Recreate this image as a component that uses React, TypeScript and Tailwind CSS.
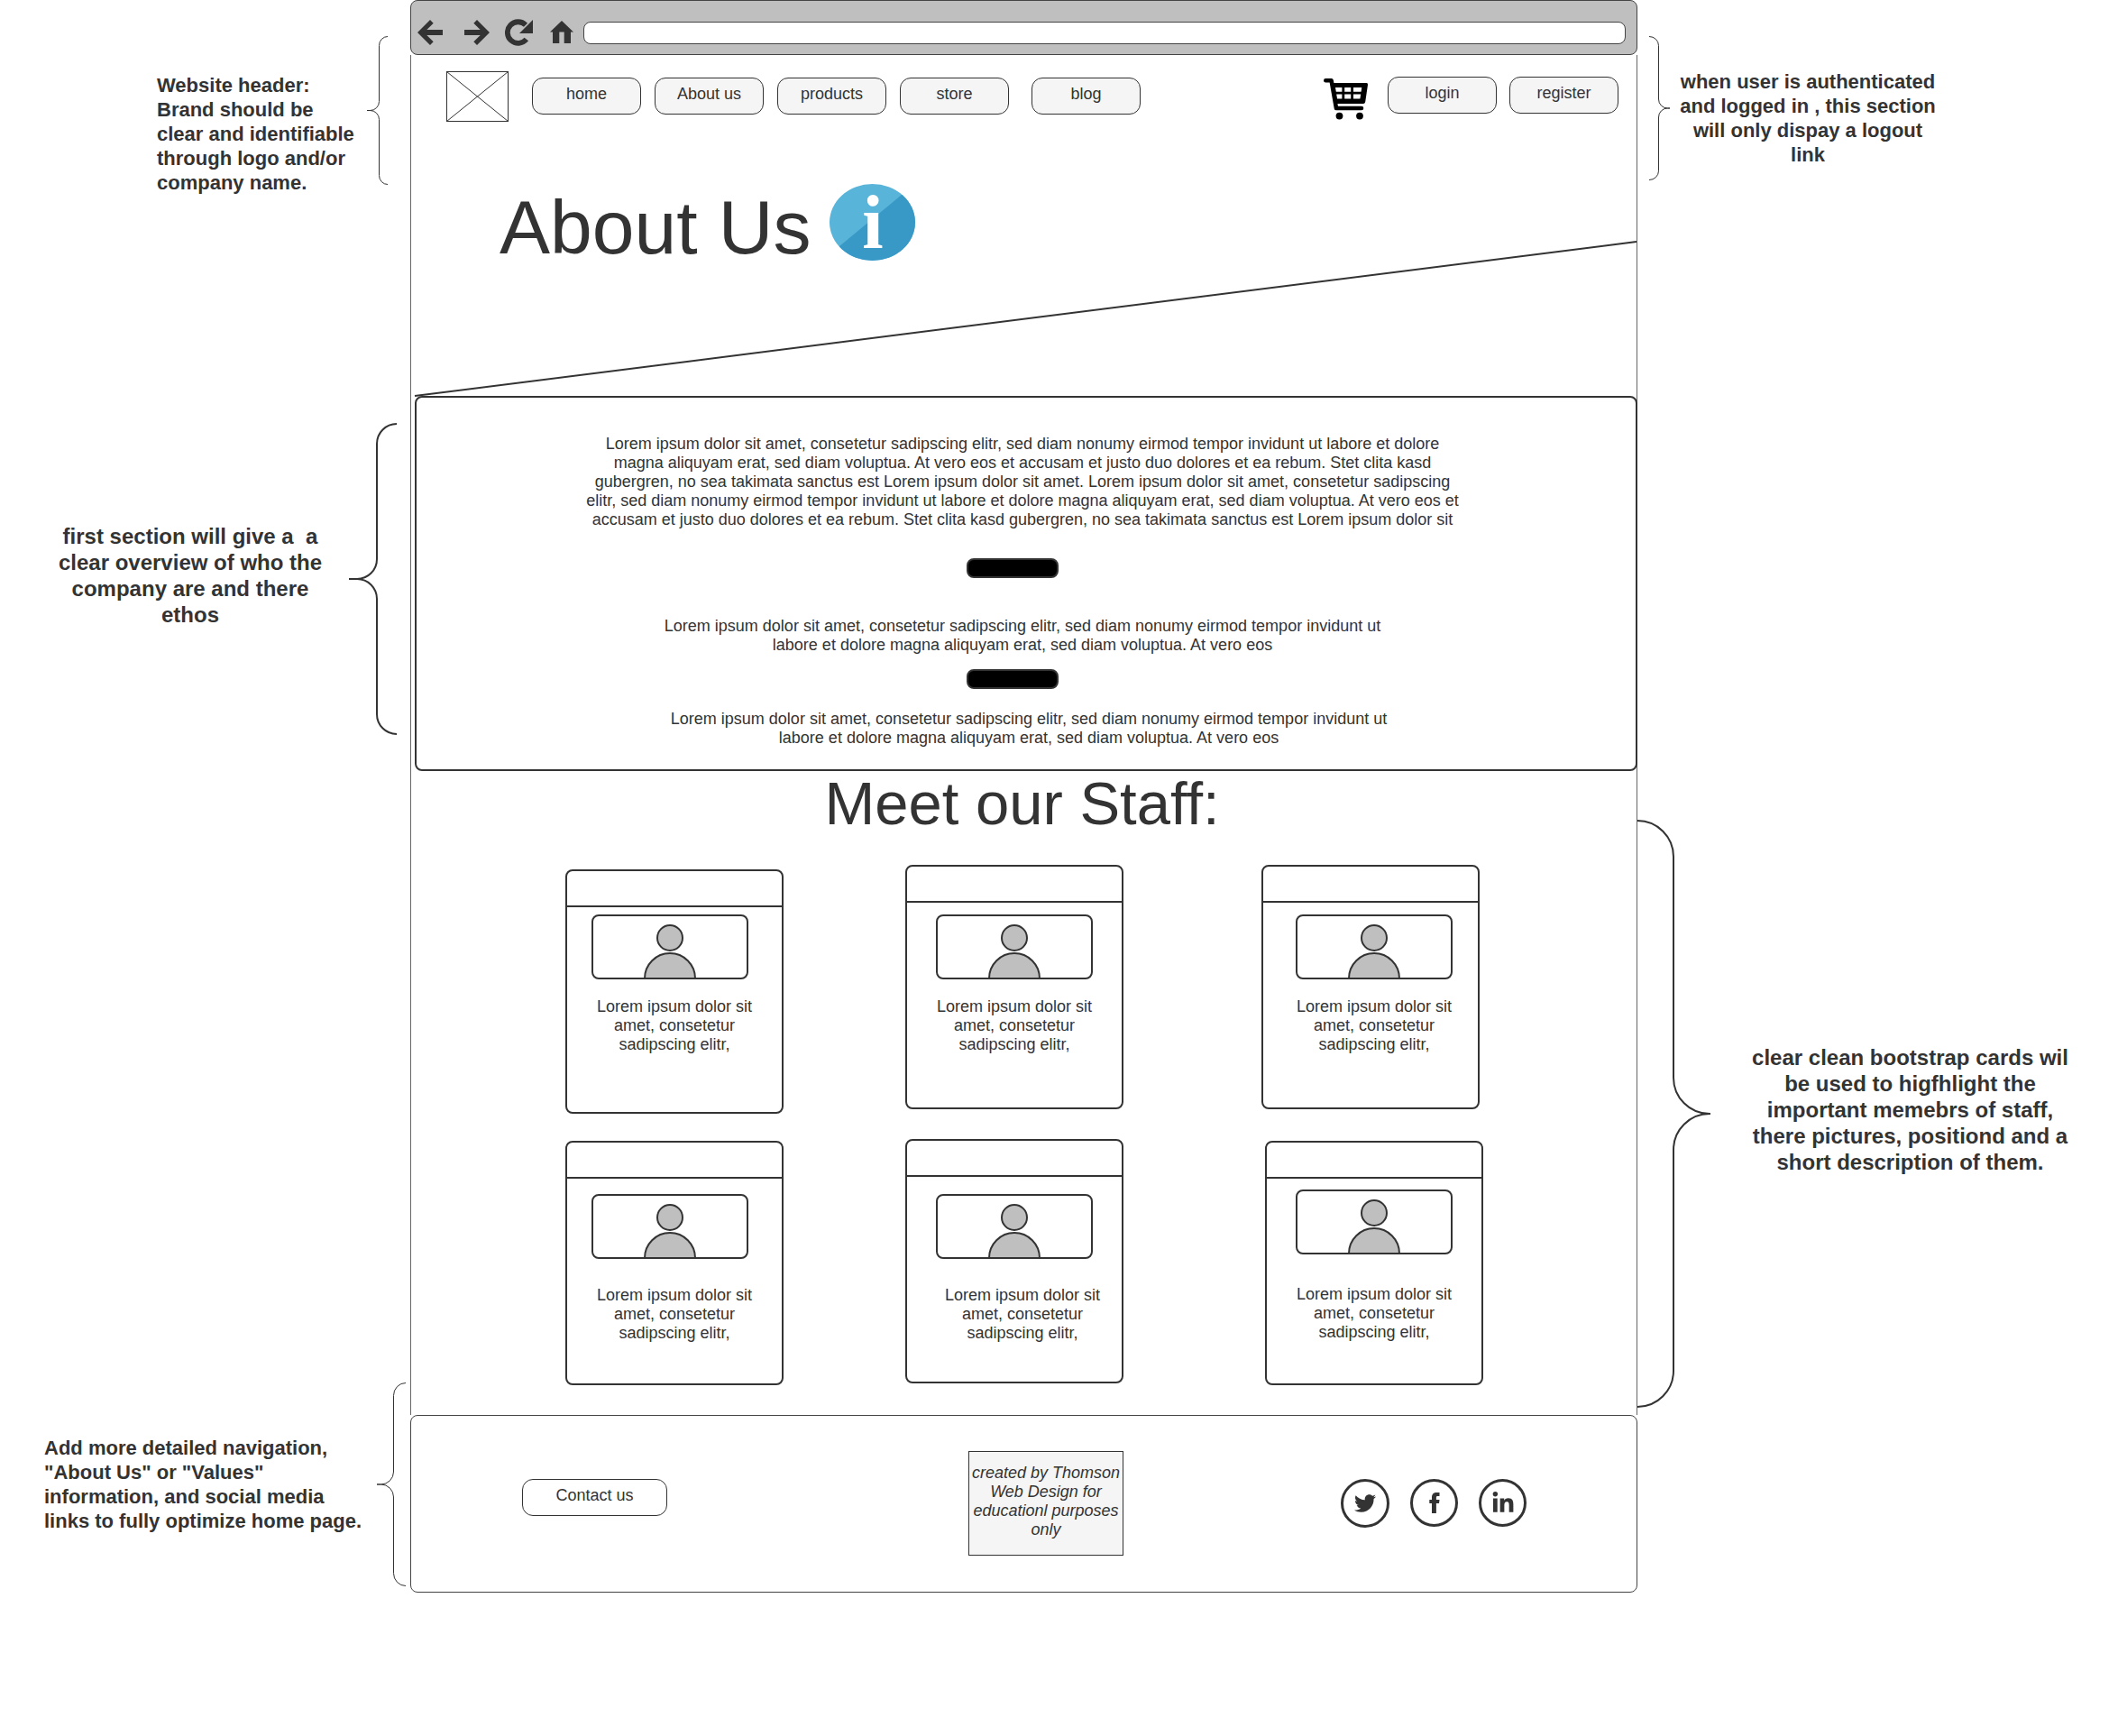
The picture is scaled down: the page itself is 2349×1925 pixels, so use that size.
import type { ReactNode } from "react";
import { FaLinkedinIn, FaTwitter } from "react-icons/fa";

const INK = "#333333";

function Lines({ lines }: { lines: string[] }) {
  return (
    <>
      {lines.map((line, i) => (
        <span key={i} className="block whitespace-pre">
          {line}
        </span>
      ))}
    </>
  );
}

type BraceProps = {
  side: "left" | "right";
  width: number;
  height: number;
  radius: number;
  spine: number;
  stroke: number;
};

/* Curly brace; `spine` is the distance from the pointed side to the long vertical stroke. */
function Brace({ side, width, height, radius: r, spine, stroke }: BraceProps) {
  const mid = height / 2;
  const t = spine - r;
  const top = stroke / 2;
  const bottom = height - stroke / 2;
  const d =
    `M${width} ${top} A${width - spine} ${r} 0 0 0 ${spine} ${top + r} V${mid - r} A${r} ${r} 0 0 1 ${t} ${mid} H0 H${t} ` +
    `A${r} ${r} 0 0 1 ${spine} ${mid + r} V${bottom - r} A${width - spine} ${r} 0 0 0 ${width} ${bottom}`;
  return (
    <svg width={width} height={height} viewBox={`0 0 ${width} ${height}`} fill="none" stroke={INK} strokeWidth={stroke} className="shrink-0" aria-hidden="true">
      <path d={d} transform={side === "right" ? `translate(${width} 0) scale(-1 1)` : undefined} />
    </svg>
  );
}

function BarButton({ label, children }: { label: string; children: ReactNode }) {
  return (
    <button type="button" aria-label={label} className="shrink-0 text-[#333333]">
      {children}
    </button>
  );
}

function BrowserBar() {
  return (
    <div className="flex h-[61px] items-center rounded-lg border border-[#444444] bg-[#bfbfbf] pt-[11px] pr-3 pl-[7px]">
      <BarButton label="Back">
        <svg width="28" height="28" viewBox="0 0 28 28" fill="currentColor">
          <path d="M0 14 14 0l3.7 3.7L10.3 11H28v6H10.3l7.4 7.3L14 28z" />
        </svg>
      </BarButton>
      <span className="w-6" />
      <BarButton label="Forward">
        <svg width="28" height="28" viewBox="0 0 28 28" fill="currentColor">
          <path d="M28 14 14 0l-3.7 3.7 7.4 7.3H0v6h17.7l-7.4 7.3L14 28z" />
        </svg>
      </BarButton>
      <span className="w-[17px]" />
      <BarButton label="Reload">
        <svg width="31" height="30" viewBox="0 0 31 30">
          <path d="M23 6.7A11.8 11.8 0 1 0 23.8 22.5" fill="none" stroke="currentColor" strokeWidth="5.8" />
          <path d="M31 1v15H16z" fill="currentColor" />
        </svg>
      </BarButton>
      <span className="w-[19px]" />
      <BarButton label="Home">
        <svg width="26" height="26" viewBox="0 0 26 26" fill="currentColor">
          <path d="M13 0l13 12.6h-3V25h-7.3V12.4h-5.4V25H3V12.6H0z" />
        </svg>
      </BarButton>
      <input type="text" aria-label="Address" className="ml-[11px] h-[25px] min-w-0 flex-1 rounded-lg border border-[#444444] bg-white px-3 text-sm outline-none" />
    </div>
  );
}

function PillLink({ children, className = "" }: { children: ReactNode; className?: string }) {
  return (
    <a href="#" className={`block h-[41px] w-[121px] rounded-xl border border-[#333333] bg-[#f5f5f5] pt-[7px] text-center text-[18px] leading-[21px] ${className}`}>
      {children}
    </a>
  );
}

function CartIcon() {
  return (
    <svg width="50" height="46" viewBox="0 0 50 46" aria-hidden="true">
      <path d="M2.3 2.3H8.6L14 33H42" fill="none" stroke="#000" strokeWidth="4.6" strokeLinecap="round" strokeLinejoin="round" />
      <path
        fillRule="evenodd"
        d="M9 5H47.5Q49.3 5 49 7L46.2 26Q45.8 28 44 28H13zM13 9.9l.8 4.8h6.6V9.9zM23.2 9.9v4.8h7V9.9zM33 9.9v4.8h8.6l.7-4.8zM14.2 17.6l.8 5h5.4v-5zM23.2 17.6v5h7v-5zM33 17.6v5h7.4l.8-5z"
      />
      <circle cx="17.5" cy="41.6" r="3.9" />
      <circle cx="40" cy="41.6" r="3.9" />
    </svg>
  );
}

function SiteHeader() {
  return (
    <header className="flex items-start pt-[18px] pr-5 pl-[39px]">
      <a href="#" aria-label="Logo" className="block shrink-0">
        <svg width="69" height="56" viewBox="0 0 69 56" fill="none" stroke={INK} strokeWidth="1">
          <rect x="0.5" y="0.5" width="68" height="55" />
          <path d="M0.5 0.5l68 55M68.5 0.5l-68 55" />
        </svg>
      </a>
      <nav className="mt-[7px] ml-[26px] flex gap-[15px]">
        <PillLink>home</PillLink>
        <PillLink>About us</PillLink>
        <PillLink>products</PillLink>
        <PillLink>store</PillLink>
        <PillLink className="ml-2.5">blog</PillLink>
      </nav>
      <div className="mt-[6px] ml-auto flex gap-[14px]">
        <a href="#" aria-label="Cart" className="mt-0.5 mr-[7px]">
          <CartIcon />
        </a>
        <PillLink>login</PillLink>
        <PillLink>register</PillLink>
      </div>
    </header>
  );
}

function InfoIcon() {
  return (
    <div className="relative h-[85px] w-[95px] shrink-0">
      <svg width="95" height="85" viewBox="0 0 95 85" aria-hidden="true">
        <defs>
          <clipPath id="info-disc">
            <ellipse cx="47.5" cy="42.5" rx="47.5" ry="42.5" />
          </clipPath>
        </defs>
        <g clipPath="url(#info-disc)">
          <rect width="95" height="85" fill="#59b4d9" />
          <path d="M80 12 11 69v16h84V12z" fill="#3999c6" />
        </g>
      </svg>
      <span className="absolute inset-x-0 -top-1 pl-0.5 text-center font-['Liberation_Serif',serif] text-[84px] leading-[94px] font-bold text-white">i</span>
    </div>
  );
}

function FacebookGlyph() {
  return (
    <svg width="12" height="23" viewBox="0 0 12 23" fill="currentColor" aria-hidden="true">
      <path d="M3 23V12H.3V8H3V5.6C3 1.8 5 0 8.4 0H11.5v4H9.4C8.2 4 7.9 4.6 7.9 5.8V8h3.6l-.5 4H7.9v11z" />
    </svg>
  );
}

function Overview() {
  const divider = <div className="mr-[30px] h-[22px] w-[102px] rounded-lg border-2 border-[#333333] bg-black" />;
  return (
    <section className="-mr-px ml-1 flex flex-col items-center rounded-lg border-2 border-[#333333] pt-[41px] pb-6 text-center text-[18px] leading-[21px]">
      <p className="mr-2">
        <Lines
          lines={[
            "Lorem ipsum dolor sit amet, consetetur sadipscing elitr, sed diam nonumy eirmod tempor invidunt ut labore et dolore",
            "magna aliquyam erat, sed diam voluptua. At vero eos et accusam et justo duo dolores et ea rebum. Stet clita kasd",
            "gubergren, no sea takimata sanctus est Lorem ipsum dolor sit amet. Lorem ipsum dolor sit amet, consetetur sadipscing",
            "elitr, sed diam nonumy eirmod tempor invidunt ut labore et dolore magna aliquyam erat, sed diam voluptua. At vero eos et",
            "accusam et justo duo dolores et ea rebum. Stet clita kasd gubergren, no sea takimata sanctus est Lorem ipsum dolor sit",
          ]}
        />
      </p>
      <div className="mt-8">{divider}</div>
      <p className="mt-[43px] mr-2">
        <Lines
          lines={[
            "Lorem ipsum dolor sit amet, consetetur sadipscing elitr, sed diam nonumy eirmod tempor invidunt ut",
            "labore et dolore magna aliquyam erat, sed diam voluptua. At vero eos",
          ]}
        />
      </p>
      <div className="mt-4">{divider}</div>
      <p className="mt-[23px] ml-1.5">
        <Lines
          lines={[
            "Lorem ipsum dolor sit amet, consetetur sadipscing elitr, sed diam nonumy eirmod tempor invidunt ut",
            "labore et dolore magna aliquyam erat, sed diam voluptua. At vero eos",
          ]}
        />
      </p>
    </section>
  );
}

type StaffCard = { card: string; photo: string; text: string };

const staff: StaffCard[] = [
  { card: "mt-[5px]", photo: "ml-[27px] mt-2", text: "mt-5" },
  { card: "", photo: "ml-8 mt-[13px]", text: "mt-5" },
  { card: "", photo: "ml-9 mt-[13px]", text: "mt-5 pl-2" },
  { card: "mt-0.5", photo: "ml-[27px] mt-[17px]", text: "mt-[30px]" },
  { card: "", photo: "ml-8 mt-[19px]", text: "mt-[30px] pl-[18px]" },
  { card: "mt-0.5 ml-1", photo: "ml-8 mt-3", text: "mt-[34px]" },
];

function Card({ card, photo, text }: StaffCard) {
  return (
    <article className={`h-[271px] w-[242px] rounded-lg border-2 border-[#333333] ${card}`}>
      <div className="h-10 border-b-2 border-[#333333]" />
      <div className={`flex h-[72px] w-[174px] justify-center rounded-lg border-2 border-[#333333] ${photo}`}>
        <svg width="60" height="70" viewBox="0 0 60 70" fill="#bfbfbf" stroke={INK} strokeWidth="2" className="shrink-0" role="img" aria-label="Staff photo">
          <circle cx="30" cy="24" r="14" />
          <path d="M2 69a28 28 0 0 1 56 0z" />
        </svg>
      </div>
      <p className={`text-center text-[18px] leading-[21px] ${text}`}>
        <Lines lines={["Lorem ipsum dolor sit", "amet, consetetur", "sadipscing elitr,"]} />
      </p>
    </article>
  );
}

function SiteFooter() {
  return (
    <footer className="flex h-[197px] items-start rounded-lg border border-[#444444] pt-[39px] pr-[122px] pl-[123px]">
      <button type="button" className="mt-[31px] h-[41px] w-[161px] rounded-xl border border-[#333333] pb-1 text-[18px] leading-[21px]">
        Contact us
      </button>
      <div className="ml-auto h-[116px] w-[172px] border border-[#333333] bg-[#f5f5f5] pt-[13px] text-center text-[18px] leading-[21px] italic">
        <Lines lines={["created by Thomson", "Web Design for", "educationl purposes", "only"]} />
      </div>
      <div className="mt-[31px] ml-[241px] flex gap-[23px]">
        <a href="#" aria-label="Twitter" className="flex size-[54px] items-center justify-center rounded-full border-3 border-[#333333]">
          <FaTwitter size={24} />
        </a>
        <a href="#" aria-label="Facebook" className="flex size-[53px] items-center justify-center rounded-full border-3 border-[#333333]">
          <FacebookGlyph />
        </a>
        <a href="#" aria-label="LinkedIn" className="flex size-[53px] items-center justify-center rounded-full border-3 border-[#333333]">
          <FaLinkedinIn size={26} />
        </a>
      </div>
    </footer>
  );
}

export default function App() {
  return (
    <div className="grid grid-cols-[455fr_1361fr_533fr] bg-white font-['Liberation_Sans',Arial,sans-serif] text-[#333333]">
      <aside className="flex flex-col pt-10">
        <div className="flex items-start justify-end pr-[25px]">
          <p className="mt-[41px] w-[233px] text-[22px] leading-[27px] font-bold">
            <Lines lines={["Website header:", "Brand should be", "clear and identifiable", "through logo and/or", "company name."]} />
          </p>
          <Brace side="left" width={23} height={165} radius={10} spine={13.5} stroke={1} />
        </div>
        <div className="mt-[253px] flex items-center justify-end pr-[15px]">
          <p className="w-[352px] pb-2 text-center text-[24px] leading-[29px] font-bold">
            <Lines lines={["first section will give a  a", "clear overview of who the", "company are and there", "ethos"]} />
          </p>
          <Brace side="left" width={53} height={346} radius={22} spine={31} stroke={2} />
        </div>
        <div className="mt-[718px] flex items-center justify-end pr-[5px]">
          <p className="w-[369px] text-[22px] leading-[27px] font-bold">
            <Lines lines={["Add more detailed navigation,", '"About Us" or "Values"', "information, and social media", "links to fully optimize home page."]} />
          </p>
          <Brace side="left" width={32} height={226} radius={14} spine={18.5} stroke={1} />
        </div>
      </aside>

      <main>
        <BrowserBar />
        <div className="border-x border-[#666666]">
          <div className="relative pb-[139px]">
            <SiteHeader />
            <div className="mt-[69px] flex items-start gap-5 pl-[98px]">
              <h1 className="text-[84px] leading-[96px]">About Us</h1>
              <InfoIcon />
            </div>
            <div className="pointer-events-none absolute inset-x-0 bottom-0 h-[173px] pl-1" aria-hidden="true">
              <svg className="block size-full overflow-visible" viewBox="0 0 100 173" preserveAspectRatio="none">
                <path d="M0 173L100 2" stroke={INK} strokeWidth="2" vectorEffect="non-scaling-stroke" />
              </svg>
            </div>
          </div>
          <Overview />
          <section className="pb-[33px]">
            <h2 className="pr-1 text-center text-[67px] leading-[72px]">Meet our Staff:</h2>
            <div className="mt-8 grid grid-cols-[379fr_397fr_242fr] gap-y-7 pr-[170px] pl-[171px]">
              {staff.map((s, i) => (
                <Card key={i} {...s} />
              ))}
            </div>
          </section>
        </div>
        <SiteFooter />
      </main>

      <aside className="flex flex-col pt-10">
        <div className="flex items-start pl-[13px]">
          <Brace side="right" width={23} height={160} radius={10} spine={12.5} stroke={1} />
          <p className="mt-[37px] w-[306px] text-center text-[22px] leading-[27px] font-bold">
            <Lines lines={["when user is authenticated", "and logged in , this section", "will only dispay a logout", "link"]} />
          </p>
        </div>
        <div className="mt-[709px] flex items-center">
          <Brace side="right" width={81} height={652} radius={40} spine={41} stroke={2} />
          <p className="w-[443px] pb-2.5 text-center text-[24px] leading-[29px] font-bold">
            <Lines lines={["clear clean bootstrap cards wil", "be used to higfhlight the", "important memebrs of staff,", "there pictures, positiond and a", "short description of them."]} />
          </p>
        </div>
      </aside>
    </div>
  );
}
